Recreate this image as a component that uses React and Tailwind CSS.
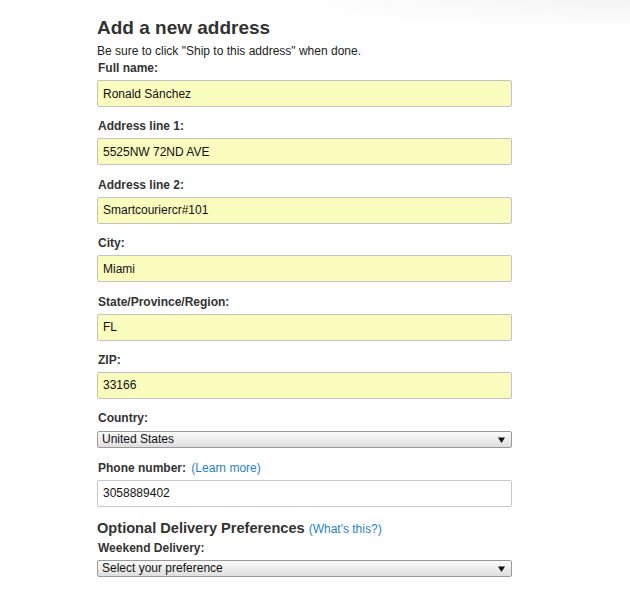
import React from "react";

const font = { fontFamily: '"Liberation Sans", Arial, sans-serif' };

function Label({ children }) {
  return (
    <div className="ml-[1px] h-[15px] text-[12px] font-bold leading-[15px] text-[#333]">
      {children}
    </div>
  );
}

function TextInput({ value, filled = true }) {
  return (
    <div
      className={`mt-[4px] flex h-[27px] w-[415px] items-center rounded-[2px] border pl-[5px] text-[12px] text-[#111] ${
        filled
          ? "border-[#c3c3c3] bg-[#fafcbe]"
          : "border-[#c8c8c8] bg-white"
      }`}
    >
      {value}
    </div>
  );
}

function Select({ value }) {
  return (
    <div className="mt-[5px] flex h-[17px] w-[415px] items-center justify-between rounded-[2px] border border-[#9a9a9a] bg-[linear-gradient(to_bottom,#fbfbfb,#dedede)] pl-[4px] pr-[6px] text-[12px] leading-[15px] text-[#111]">
      <span>{value}</span>
      <svg width="7" height="6" viewBox="0 0 7 6">
        <path d="M0 0.5 H7 L3.5 6 Z" fill="#111" />
      </svg>
    </div>
  );
}

function Field({ label, value }) {
  return (
    <div className="mb-[12.4px]">
      <Label>{label}</Label>
      <TextInput value={value} />
    </div>
  );
}

export default function App() {
  return (
    <div
      className="min-h-[591px] w-[630px] bg-white bg-[linear-gradient(to_right,#ffffff_45%,rgba(255,255,255,0)_95%),linear-gradient(to_bottom,#f4f4f4,#ffffff_30px)] pl-[97px] pt-[17px]"
      style={font}
    >
      <h1 className="text-[19px] font-bold leading-[22px] text-[#333]">
        Add a new address
      </h1>
      <p className="mt-[4px] text-[12px] leading-[16px] text-[#222]">
        Be sure to click "Ship to this address" when done.
      </p>
      <div className="mt-[2px]">
        <Field label="Full name:" value="Ronald Sánchez" />
        <Field label="Address line 1:" value="5525NW 72ND AVE" />
        <Field label="Address line 2:" value="Smartcouriercr#101" />
        <Field label="City:" value="Miami" />
        <Field label="State/Province/Region:" value="FL" />
        <Field label="ZIP:" value="33166" />
        <div className="mb-[12.4px]">
          <Label>Country:</Label>
          <Select value="United States" />
        </div>
        <div className="mb-[12.5px]">
          <Label>
            Phone number:{" "}
            <span className="ml-[2px] font-normal text-[#1f83c9]">(Learn more)</span>
          </Label>
          <TextInput value="3058889402" filled={false} />
        </div>
        <div className="flex h-[18px] items-baseline leading-[18px]">
          <span className="text-[14.6px] font-bold text-[#333]">
            Optional Delivery Preferences
          </span>
          <span className="ml-[4px] text-[12px] text-[#1f83c9]">(What's this?)</span>
        </div>
        <div className="mt-[4px]">
          <Label>Weekend Delivery:</Label>
          <div className="-mt-[1px]">
            <Select value="Select your preference" />
          </div>
        </div>
      </div>
    </div>
  );
}
